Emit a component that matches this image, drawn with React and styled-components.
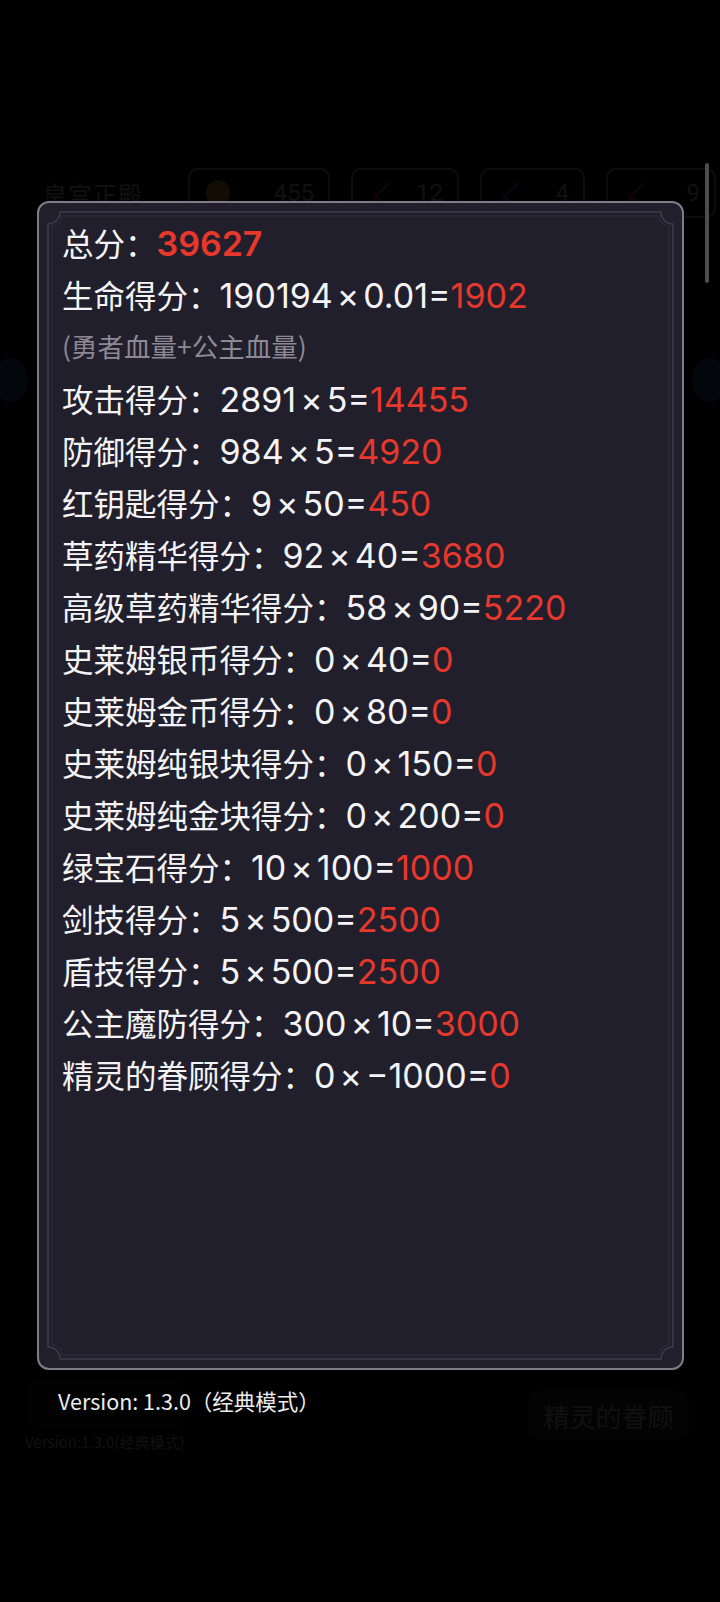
import React from "react";
import styled, { createGlobalStyle } from "styled-components";

const GlobalStyle = createGlobalStyle`
  html, body { margin: 0; padding: 0; background: #000; }
  body { font-family: "Noto Sans CJK SC", sans-serif; -webkit-font-smoothing: antialiased; }
  #root { width: 720px; height: 1602px; position: relative; overflow: hidden; }
`;

/* ---------- background game page (dimmed under overlay) ---------- */
const Page = styled.div`
  width: 720px;
  height: 1602px;
  box-sizing: border-box;
  background: #000;
  padding-top: 168px;
  display: flex;
  flex-direction: column;
  color: #fff;
`;
const Header = styled.div`
  display: flex;
  align-items: center;
  gap: 21px;
  padding-left: 43px;
  height: 50px;
`;
const Title = styled.div`
  width: 124px;
  font-size: 24px;
  letter-spacing: 1px;
  color: #ccc;
`;
const Pill = styled.div`
  width: ${(p) => p.$w}px;
  height: 50px;
  box-sizing: border-box;
  border: 2px solid #aaa;
  border-radius: 10px;
  display: flex;
  align-items: center;
  justify-content: space-between;
  padding: 0 14px 0 16px;
  font-size: 24px;
  color: #ccc;
  font-family: "Roboto", sans-serif;
`;
const Coin = styled.div`
  width: 24px;
  height: 26px;
  border-radius: 50%;
  background: #d9a520;
`;
const Middle = styled.div`
  flex: 1;
  display: flex;
  justify-content: space-between;
  align-items: flex-start;
  padding-top: 140px;
`;
const SideBtn = styled.div`
  width: 34px;
  height: 44px;
  border-radius: 50%;
  background: #2a5f92;
  margin: 0 ${(p) => (p.$right ? "-6px" : "0")} 0 ${(p) => (p.$right ? "0" : "-6px")};
`;
const Footer = styled.div`
  display: flex;
  justify-content: space-between;
  align-items: flex-start;
  padding: 0 31px 150px 25px;
`;
const FooterLeft = styled.div`
  display: flex;
  flex-direction: column;
  gap: 4px;
`;
const FooterBox = styled.div`
  width: 154px;
  height: 48px;
  border-radius: 8px;
  background: #222;
  margin-left: 5px;
`;
const SmallVersion = styled.div`
  font-size: 15px;
  color: #ccc;
`;
const BgButton = styled.div`
  width: 161px;
  height: 48px;
  margin-top: 12px;
  border-radius: 10px;
  background: #26262e;
  display: flex;
  align-items: center;
  justify-content: center;
  font-size: 26px;
  color: #ccc;
`;

/* ---------- overlay dialog ---------- */
const Overlay = styled.div`
  position: absolute;
  inset: 0;
  background: rgba(0, 0, 0, 0.92);
  display: flex;
  flex-direction: column;
  padding: 201px 36px 0 37px;
  box-sizing: border-box;
`;
const Scrollbar = styled.div`
  position: absolute;
  left: 705px;
  top: 163px;
  width: 4px;
  height: 120px;
  border-radius: 2px;
  background: #4d4d4d;
`;
const Dialog = styled.div`
  position: relative;
  width: 647px;
  height: 1169px;
  box-sizing: border-box;
  border: 2px solid #7f7c89;
  border-radius: 12px;
  background: #221f2d;
  padding: 13px 0 0 23px;
  display: flex;
  flex-direction: column;
`;
const Frame = styled.svg`
  position: absolute;
  inset: 0;
  width: 100%;
  height: 100%;
  pointer-events: none;
`;
const Row = styled.div`
  position: relative;
  font-family: "Inter", "Noto Sans CJK SC", sans-serif;
  font-size: 34px;
  line-height: 52px;
  height: 52px;
  color: #f4f4f6;
  white-space: nowrap;
`;
const Label = styled.span`
  font-family: "Noto Sans CJK SC", sans-serif;
  font-size: 31.5px;
`;
const Times = styled.span`
  margin: 0 4px;
`;
const Value = styled.span`
  color: #e6382c;
  font-weight: ${(p) => (p.$bold ? 600 : 400)};
`;
const Note = styled.div`
  position: relative;
  font-size: 26.5px;
  line-height: 52px;
  height: 52px;
  color: #8c8994;
`;
const Version = styled.div`
  margin-top: 16px;
  padding-left: 21px;
  font-size: 21.5px;
  line-height: 30px;
  color: #ececec;
`;

const rows = [
  ["攻击得分：", "2891", "5", "14455"],
  ["防御得分：", "984", "5", "4920"],
  ["红钥匙得分：", "9", "50", "450"],
  ["草药精华得分：", "92", "40", "3680"],
  ["高级草药精华得分：", "58", "90", "5220"],
  ["史莱姆银币得分：", "0", "40", "0"],
  ["史莱姆金币得分：", "0", "80", "0"],
  ["史莱姆纯银块得分：", "0", "150", "0"],
  ["史莱姆纯金块得分：", "0", "200", "0"],
  ["绿宝石得分：", "10", "100", "1000"],
  ["剑技得分：", "5", "500", "2500"],
  ["盾技得分：", "5", "500", "2500"],
  ["公主魔防得分：", "300", "10", "3000"],
  ["精灵的眷顾得分：", "0", "−1000", "0"],
];

const framePath = (w, h, i, r) =>
  `M${i + r} ${i} H${w - i - r} A${r} ${r} 0 0 0 ${w - i} ${i + r} V${h - i - r} A${r} ${r} 0 0 0 ${w - i - r} ${h - i} H${i + r} A${r} ${r} 0 0 0 ${i} ${h - i - r} V${i + r} A${r} ${r} 0 0 0 ${i + r} ${i} Z`;

const Sword = ({ color }) => (
  <svg width="26" height="26" viewBox="0 0 26 26">
    <path d="M22 3 L9 16 L7 14 L20 2 Z" fill={color} />
    <path d="M5 15 L11 21 M4 22 L8 18" stroke={color} strokeWidth="3" strokeLinecap="round" />
  </svg>
);

export default function App() {
  const W = 643;
  const H = 1165;
  return (
    <>
      <GlobalStyle />
      <Page>
        <Header>
          <Title>皇宫正殿</Title>
          <Pill $w={142}>
            <Coin />
            <span>455</span>
          </Pill>
          <Pill $w={108}>
            <Sword color="#c0392b" />
            <span>12</span>
          </Pill>
          <Pill $w={105}>
            <Sword color="#3b6fc4" />
            <span>4</span>
          </Pill>
          <Pill $w={110}>
            <Sword color="#c0392b" />
            <span>9</span>
          </Pill>
        </Header>
        <Middle>
          <SideBtn />
          <SideBtn $right />
        </Middle>
        <Footer>
          <FooterLeft>
            <FooterBox />
            <SmallVersion>Version:1.3.0(经典模式)</SmallVersion>
          </FooterLeft>
          <BgButton>精灵的眷顾</BgButton>
        </Footer>
      </Page>
      <Overlay>
        <Scrollbar />
        <Dialog>
          <Frame viewBox={`0 0 ${W} ${H}`}>
            <path d={framePath(W, H, 9, 12)} fill="none" stroke="#3f3c4e" strokeWidth="1.5" />
            <path d={framePath(W, H, 13, 10)} fill="none" stroke="#2f2c3c" strokeWidth="1" />
          </Frame>
          <Row>
            <Label>总分：</Label>
            <Value $bold>39627</Value>
          </Row>
          <Row>
            <Label>生命得分：</Label>190194<Times>×</Times>0.01=<Value>1902</Value>
          </Row>
          <Note>(勇者血量+公主血量)</Note>
          {rows.map(([label, a, b, val]) => (
            <Row key={label}>
              <Label>{label}</Label>
              {a}
              <Times>×</Times>
              {b}=<Value>{val}</Value>
            </Row>
          ))}
        </Dialog>
        <Version>Version: 1.3.0（经典模式）</Version>
      </Overlay>
    </>
  );
}
